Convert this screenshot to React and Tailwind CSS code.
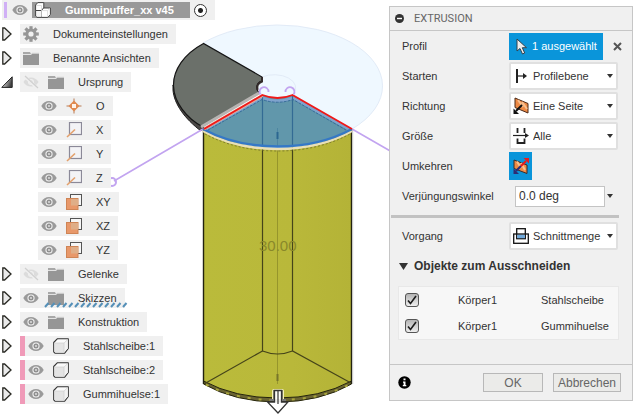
import React from "react";

/* ---------- browser tree icons ---------- */

function EyeIcon() {
  return (
    <svg width="16" height="12" viewBox="0 0 16 12" aria-hidden="true">
      <path d="M0.3 6C3.6-0.6 12.4-0.6 15.7 6C12.4 12.6 3.6 12.6 0.3 6Z" fill="#9a9a9a" />
      <circle cx="8" cy="6" r="3.6" fill="#f0f0f0" />
      <circle cx="8" cy="6" r="2.5" fill="#8f8f8f" />
      <circle cx="8" cy="6" r="0.9" fill="#e6e6e6" />
    </svg>
  );
}

function EyeOffIcon() {
  return (
    <svg width="16" height="14" viewBox="0 0 16 14" aria-hidden="true">
      <path d="M0.5 7C3.6 1 12.4 1 15.5 7C12.4 13 3.6 13 0.5 7Z" fill="#dcdcdc" />
      <circle cx="8" cy="7" r="3" fill="#f0f0f0" />
      <circle cx="8" cy="7" r="1.8" fill="#d4d4d4" />
      <path d="M1.5 1.2L14 13" stroke="#f0f0f0" strokeWidth="3" />
      <path d="M2 1L15 13" stroke="#d0d0d0" strokeWidth="1.3" />
    </svg>
  );
}

function FolderIcon() {
  return (
    <svg width="16" height="13" viewBox="0 0 16 13" aria-hidden="true">
      <path d="M0 0H7L8 2H0Z" fill="#a8a8a8" />
      <path d="M0 3H8L9 1.5H16V13H0Z" fill="#969696" />
      <path d="M0 2.5H8L9 1H16" fill="none" stroke="#dddddd" strokeWidth="0.7" />
    </svg>
  );
}

function GearIcon() {
  return (
    <svg width="16" height="16" viewBox="-8 -8 16 16" aria-hidden="true">
      <g fill="#969696">
        {[0, 45, 90, 135].map((a) => (
          <rect key={a} x="-1.6" y="-7.8" width="3.2" height="15.6" transform={`rotate(${a})`} />
        ))}
        <circle r="5.6" />
      </g>
      <circle r="2.6" fill="#f0f0f0" />
    </svg>
  );
}

function OriginIcon() {
  return (
    <svg width="16" height="16" viewBox="0 0 16 16" aria-hidden="true">
      <path d="M8 0.500V15.500M0.500 8H15.500" stroke="#b97a52" strokeWidth="1" />
      <path d="M8 2.5L13.5 8L8 13.5L2.5 8Z" fill="#e08a50" />
      <rect x="6" y="6" width="4" height="4" fill="#fff3ea" />
    </svg>
  );
}

function AxisIcon() {
  return (
    <svg width="16" height="16" viewBox="0 0 16 16" aria-hidden="true">
      <rect x="3.5" y="0.5" width="12" height="12" fill="#f3f3f6" stroke="#8b8998" strokeWidth="1.2" />
      <path d="M1 15L9 7.5" stroke="#e3a06c" strokeWidth="1.6" />
    </svg>
  );
}

function PlaneIcon() {
  return (
    <svg width="16" height="16" viewBox="0 0 16 16" aria-hidden="true">
      <rect x="4.5" y="0.5" width="11" height="11" fill="#f6f6f6" stroke="#555" />
      <rect x="0.5" y="4.5" width="11.5" height="11" fill="#e8986a" stroke="#cf8455" />
      <rect x="5" y="5" width="7" height="6.5" fill="#dfae88" />
    </svg>
  );
}

function BodyIcon() {
  return (
    <svg width="16" height="16" viewBox="0 0 16 16" aria-hidden="true">
      <path d="M0.7 4.5L4.5 0.7H15.3V10.5L11.5 15.3H2.2L0.7 13.8Z" fill="#fafafa" stroke="#333" strokeWidth="1.1" strokeLinejoin="round" />
      <path d="M1.5 5H11V14.6H2.5L1.5 13.5Z" fill="#e4e4e4" />
      <path d="M11 5L14.8 1.5V10.2L11 14.6Z" fill="#f2f2f2" />
      <path d="M11 5V14.5M11 5L14.8 1.5M1.5 5H11" stroke="#cfcfcf" strokeWidth="0.7" />
    </svg>
  );
}

function AssemblyIcon() {
  return (
    <svg width="16" height="16" viewBox="0 0 16 16" aria-hidden="true">
      <path d="M0.600 3L2.800 0.600H8.800V6.500L7 8.500H0.600Z" fill="#fff" stroke="#444" />
      <path d="M0.600 8.500H6.500V15.400H2L0.600 14Z" fill="#f4f4f4" stroke="#444" />
      <path d="M6.500 8.500L8.500 6H15.400V12.500L12.800 15.400H6.500Z" fill="#fff" stroke="#444" />
      <path d="M1.200 3.500H6.500V14.800M7 8.600H12.600V15M12.600 8.600L15 6.4" fill="none" stroke="#d4d4d4" strokeWidth="0.8" />
    </svg>
  );
}

function Expander({ open, name }) {
  return (
    <button type="button" aria-label={name} aria-expanded={open} className="flex w-5 shrink-0 items-center pl-px">
      {open ? (
        <svg width="12" height="12" viewBox="0 0 12 12" aria-hidden="true">
          <defs>
            <linearGradient id="openArrow" x1="0" y1="0" x2="1" y2="0.4">
              <stop offset="0.2" stopColor="#eeeeee" />
              <stop offset="1" stopColor="#444444" />
            </linearGradient>
          </defs>
          <path d="M0.8 11.4L11.2 0.8V11.4Z" fill="url(#openArrow)" stroke="#222" />
        </svg>
      ) : (
        <svg width="12" height="14" viewBox="0 0 12 14" aria-hidden="true">
          <path d="M1.8 1H3.6L10 7L3.6 13H1.8Z" fill="#eaeaea" stroke="#2a2a24" strokeWidth="1.3" />
        </svg>
      )}
    </button>
  );
}

/* ---------- browser tree ---------- */

const ICONS = {
  gear: GearIcon,
  folder: FolderIcon,
  origin: OriginIcon,
  axis: AxisIcon,
  plane: PlaneIcon,
  body: BodyIcon,
};

const ROWS = [
  { label: "Dokumenteinstellungen", icon: "gear", expander: true },
  { label: "Benannte Ansichten", icon: "folder", expander: true },
  { label: "Ursprung", icon: "folder", eye: "off", expander: true, open: true },
  { label: "O", icon: "origin", eye: "on" },
  { label: "X", icon: "axis", eye: "on" },
  { label: "Y", icon: "axis", eye: "on" },
  { label: "Z", icon: "axis", eye: "on" },
  { label: "XY", icon: "plane", eye: "on" },
  { label: "XZ", icon: "plane", eye: "on" },
  { label: "YZ", icon: "plane", eye: "on" },
  { label: "Gelenke", icon: "folder", eye: "off", expander: true },
  { label: "Skizzen", icon: "folder", eye: "on", expander: true, hatched: true },
  { label: "Konstruktion", icon: "folder", eye: "on", expander: true },
  { label: "Stahlscheibe:1", icon: "body", eye: "on", expander: true, bar: true },
  { label: "Stahlscheibe:2", icon: "body", eye: "on", expander: true, bar: true },
  { label: "Gummihuelse:1", icon: "body", eye: "on", expander: true, bar: true },
];

function TreeRow({ label, icon, eye, expander, open = false, bar, hatched }) {
  const Icon = ICONS[icon];
  return (
    <li className="flex h-5">
      {expander ? <Expander open={open} name={label} /> : <span className="w-[38px] shrink-0" />}
      <div className="relative flex items-center bg-[#f0f0f0] pr-2">
        {bar && <span className="h-full w-[5px] bg-[#f09ab8]" />}
        {eye && (
          <button type="button" aria-label={`${label} Sichtbarkeit`} className="flex w-[22px] justify-center">
            {eye === "on" ? <EyeIcon /> : <EyeOffIcon />}
          </button>
        )}
        <span className={eye ? "flex w-7 justify-center" : "flex w-[22px] justify-center"}>
          <Icon />
        </span>
        <span className={eye ? "pl-2" : "pl-[11px]"}>{label}</span>
        {hatched && (
          <svg className="absolute bottom-0 left-6" width="84" height="6" aria-hidden="true">
            <defs>
              <pattern id="hatch" width="6" height="6" patternUnits="userSpaceOnUse">
                <path d="M1 5L4.500 1" stroke="#5590b8" strokeWidth="2" />
              </pattern>
            </defs>
            <rect width="84" height="6" fill="url(#hatch)" />
          </svg>
        )}
      </div>
    </li>
  );
}

function BrowserTree() {
  return (
    <nav aria-label="Browser" className="relative flex flex-col items-start gap-1">
      <div className="ml-0.5 flex h-5 items-center bg-[#f0f0f0] pr-2">
        <span className="ml-0.5 h-4 w-[3px] bg-[#d0b0f5]" />
        <button type="button" aria-label="Sichtbarkeit" className="flex w-[25px] justify-center">
          <EyeIcon />
        </button>
        <div className="flex h-4 items-center bg-[#999999] pr-4 pl-[3px] font-bold text-white">
          <AssemblyIcon />
          <span className="pl-[14px]">Gummipuffer_xx v45</span>
        </div>
        <input
          type="radio"
          defaultChecked
          aria-label="Komponente aktivieren"
          className="ml-1 size-[13px] appearance-none rounded-full border border-[#333] bg-white bg-[radial-gradient(circle,#222_0_2px,transparent_3px)]"
        />
      </div>
      <ul className="flex flex-col gap-1">
        {ROWS.map((row) => (
          <TreeRow key={row.label} {...row} />
        ))}
      </ul>
    </nav>
  );
}

/* ---------- model view ---------- */

function ModelView() {
  return (
    <svg className="absolute inset-0 h-full w-full" role="img" aria-label="3D-Ansicht">
      <defs>
        <linearGradient id="rubber" x1="0" y1="0" x2="1" y2="0">
          <stop offset="0" stopColor="#babb3b" />
          <stop offset="0.6" stopColor="#b9b83a" />
          <stop offset="1" stopColor="#b4b337" />
        </linearGradient>
      </defs>

      {/* sketch disc */}
      <path d="M203 43A105 61 0 0 1 352 129L292 95Q277 101 262 95L257 86L262 77Z" fill="#eff8ff" stroke="#e2ebf7" />
      <path d="M262 77A21.500 13 0 0 1 293 94" fill="none" stroke="#e2ebf7" />

      {/* steel washer */}
      <path d="M173 85V90C174 104 185 119 201 131L204 128L180 100Z" fill="#4b4846" stroke="#1a1a1a" />
      <path d="M203.500 43.500L262 77V81C257 82 255 88 259 93L203 127C186 118 174 102 173.500 86C173 70 184 54 203.500 43.500Z" fill="#6b706a" />
      <path d="M203 127C186 118 174 102 173.500 86C173 70 184 54 203.500 43.500L262 77V81C257 82 255 88 259 93" fill="none" stroke="#151515" strokeWidth="1.2" />
      <path d="M262 77V81.500C258 83 256.500 86 257.500 90" fill="none" stroke="#332a2a" strokeWidth="2" />

      {/* rubber body */}
      <path d="M203.500 129V383Q235 402 277.500 402Q320 402 351.500 383V129Q320 148 277.500 148Q235 148 203.500 129Z" fill="url(#rubber)" />
      <path d="M203.500 381Q235 398 277.500 398Q320 398 351.500 381V384Q320 402 277.500 402Q235 402 203.500 384Z" fill="#6a6433" stroke="#24230c" strokeWidth="1" />
      <path d="M206 384.500Q235 400 277.500 400Q320 400 349 384.500" fill="none" stroke="#a8a53c" strokeWidth="2" strokeDasharray="3 8" />
      <path d="M203.500 129V384M351.500 129V384" stroke="#222211" strokeWidth="1.4" />
      <path d="M352.700 130V384" stroke="#c9c9c9" />
      <path d="M262.500 145V351M292.500 145V351" stroke="#45441a" strokeWidth="1.2" />
      <path d="M277.500 148V384" stroke="#96952c" />
      <path d="M262.500 351Q277.500 357 292.500 351L351 383M262.500 351L204 384" fill="none" stroke="#45441a" strokeWidth="1.2" />
      <path d="M277.500 374V381" stroke="#77752a" strokeWidth="2" />
      <text x="259" y="251" fontSize="15" fill="#89882a" fontFamily="Liberation Sans, Arial, sans-serif">30.00</text>

      {/* construction lines */}
      <path d="M203 129L114 181M352 129L392 152" stroke="#c2a4f0" strokeWidth="1.6" />
      <circle cx="112" cy="182" r="4" fill="none" stroke="#c2a4f0" strokeWidth="2" />

      {/* selected profile */}
      <path d="M203 129L262.500 95Q277.500 101 292.500 95L352 129Q320 147 277.500 147Q235 147 203 129Z" fill="#6197ab" />
      <path d="M206 129L262 98Q277.500 104 293 98L349 129" fill="none" stroke="#7fa3cd" strokeWidth="3" />
      <path d="M208 130L262 99.500Q277.500 105 293 99.500L346 130" fill="none" stroke="#356c97" strokeDasharray="3 1" />
      <path d="M262.500 96V145M292.500 96V145" stroke="#336b94" strokeWidth="1.2" />
      <path d="M277.500 128V146" stroke="#4d86a1" />
      <path d="M277.500 132V139" stroke="#2c6791" strokeWidth="2" />
      <path d="M203 131Q235 149 277.500 149Q320 149 352 131" fill="none" stroke="#e9dfb8" strokeWidth="2.500" />
      <path d="M205 134Q237 151 277.500 151Q318 151 350 134" fill="none" stroke="#6b6928" strokeWidth="0.8" strokeDasharray="2 2" />
      <path d="M203 129Q235 146.500 277.500 146.500Q320 146.500 352 129" fill="none" stroke="#3578c6" strokeWidth="2.500" />
      <path d="M259 93L201 127" stroke="#b7b4b2" strokeWidth="3" />
      <path d="M204 129L262.500 95.500" stroke="#e6ad9b" strokeWidth="3" />
      <path d="M204 129L262.500 95Q277.500 101 292.500 95L352 129" fill="none" stroke="#f01818" strokeWidth="1.800" />
      <path d="M260.500 94.500A4.500 4.500 0 1 1 268.500 92M293.500 94.500A4.500 4.500 0 1 0 285.500 92" fill="none" stroke="#c2a4f0" strokeWidth="1.800" />

      {/* extrusion handle */}
      <path d="M272 399V391Q272 389 274 389H282Q284 389 284 391V399Z" fill="#f5f2b8" />
      <path d="M274.500 390.500H281.500V402H288L278 413L267.500 402H274.500Z" fill="#ffffff" fillOpacity="0.9" stroke="#333" strokeWidth="1.3" />
      <path d="M274 402V390M278 391V404M282 390V402" stroke="#333" strokeWidth="1.2" />
      <path d="M270 400H274M282 400H286" stroke="#777" strokeWidth="2" />
    </svg>
  );
}

/* ---------- dialog icons ---------- */

function CursorIcon() {
  return (
    <svg width="12" height="17" viewBox="0 0 12 17" aria-hidden="true">
      <path d="M1 1V13L4 10.500L6.500 16L8.700 15L6.300 9.700H10.500Z" fill="#eeeeee" stroke="#35404a" />
    </svg>
  );
}

function StartIcon() {
  return (
    <svg width="16" height="16" viewBox="0 0 16 16" aria-hidden="true">
      <path d="M4 1V15" stroke="#222" strokeWidth="2" />
      <path d="M4 8H12" stroke="#222" strokeWidth="1.2" />
      <path d="M10 5L14 8L10 11Z" fill="#222" />
    </svg>
  );
}

function SideIcon() {
  return (
    <svg width="16" height="18" viewBox="0 0 16 18" aria-hidden="true">
      <path d="M2 1L15 6.500V16L2 10.500Z" fill="#ee8a45" stroke="#4b2a18" />
      <path d="M5 3L10 10M9 5L14 12" stroke="#f9c08f" strokeWidth="2" />
      <path d="M9 8L3 14" stroke="#111" strokeWidth="2" />
      <path d="M0.500 11.500V17H6Z" fill="#111" />
    </svg>
  );
}

function ExtentIcon() {
  return (
    <svg width="16" height="18" viewBox="0 0 16 18" aria-hidden="true">
      <path d="M4.500 1V6M11.500 1V6" stroke="#222" strokeWidth="1.800" />
      <path d="M0 8.500H13" stroke="#222" strokeWidth="1.2" />
      <path d="M12 6L16 8.500L12 11Z" fill="#222" />
      <path d="M4.500 11.500V16H11.500V11.500" fill="none" stroke="#222" strokeWidth="1.800" />
    </svg>
  );
}

function FlipIcon() {
  return (
    <svg width="18" height="18" viewBox="0 0 18 18" aria-hidden="true">
      <path d="M2 3L15 8V16.500L2 11.500Z" fill="#ee8a45" stroke="#3a2a28" />
      <path d="M5 4.500L9 11M9 6L13 13" stroke="#f9c08f" strokeWidth="2" />
      <path d="M9 9L4 14" stroke="#2d2d75" strokeWidth="2.200" />
      <path d="M1.500 11.500V17H7Z" fill="#2d2d75" />
      <path d="M9 9L14 4" stroke="#e81c1c" strokeWidth="2.200" />
      <path d="M11.500 1H17V6.500Z" fill="#e81c1c" />
    </svg>
  );
}

function IntersectIcon() {
  return (
    <svg width="16" height="16" viewBox="0 0 16 16" aria-hidden="true">
      <rect x="0.700" y="6" width="14.600" height="9.300" fill="#fff" stroke="#111" strokeWidth="1.300" />
      <rect x="3.700" y="0.700" width="8.600" height="10" fill="#fff" stroke="#111" strokeWidth="1.300" />
      <rect x="4.200" y="6.500" width="7.600" height="3.700" fill="#6fa9dc" />
      <path d="M4 6H12" stroke="#111" strokeWidth="1.300" />
    </svg>
  );
}

function Caret() {
  return (
    <svg className="pointer-events-none shrink-0" width="6" height="4" viewBox="0 0 6 4" aria-hidden="true">
      <path d="M0 0H6L3 4Z" fill="#333" />
    </svg>
  );
}

/* ---------- dialog ---------- */

function Field({ label, htmlFor, children }) {
  return (
    <div className="flex h-[30px] items-center pr-[14px] pl-3">
      <label htmlFor={htmlFor} className="w-[107px] shrink-0">
        {label}
      </label>
      {children}
    </div>
  );
}

function IconSelect({ id, icon, value }) {
  return (
    <div className="flex h-7 flex-1 items-center gap-1 rounded-xs border-2 border-[#e0e0e0] bg-white pr-[3px] pl-[2px]">
      <span className="flex w-4 shrink-0 justify-center">{icon}</span>
      <select id={id} defaultValue={value} className="min-w-0 flex-1 appearance-none bg-transparent">
        <option>{value}</option>
      </select>
      <Caret />
    </div>
  );
}

function CutRow({ body, component }) {
  return (
    <tr className="h-[26px]">
      <td className="w-[59px] pl-[6px]">
        <label className="grid size-[14px]">
          <input
            type="checkbox"
            defaultChecked
            aria-label={`${body} ${component}`}
            className="col-start-1 row-start-1 size-[14px] appearance-none rounded-[3px] border border-[#555] bg-linear-to-b from-[#b5b5b5] to-[#eeeeee]"
          />
          <svg className="pointer-events-none col-start-1 row-start-1" width="14" height="14" viewBox="0 0 14 14" aria-hidden="true">
            <path d="M3 7.500L5.500 10.500L11 3" fill="none" stroke="#1c1c1c" strokeWidth="1.600" />
          </svg>
        </label>
      </td>
      <td className="w-[83px]">{body}</td>
      <td>{component}</td>
    </tr>
  );
}

function ExtrusionDialog() {
  return (
    <section aria-label="Extrusion" className="relative mt-[6px] w-[244px] shrink-0 self-start border border-[#c6c6c6] bg-[#f0f0f0]">
      <header className="flex h-6 items-center gap-[10px] border-b border-[#c6c6c6] pl-[5px]">
        <button type="button" aria-label="Einklappen">
          <svg width="9" height="9" viewBox="0 0 9 9" aria-hidden="true">
            <circle cx="4.500" cy="4.500" r="4.500" fill="#333" />
            <path d="M2 4.500H7" stroke="#fff" strokeWidth="1.400" />
          </svg>
        </button>
        <h2 className="font-[Roboto,sans-serif] text-[#666]">EXTRUSION</h2>
      </header>

      <Field label="Profil" htmlFor="profil">
        <button id="profil" type="button" className="flex h-[27px] w-[94px] items-center gap-1 bg-[#0a95da] pl-[7px] text-white">
          <CursorIcon />
          <span className="whitespace-nowrap">1 ausgewählt</span>
        </button>
        <button type="button" aria-label="Auswahl aufheben" className="-mr-1 ml-auto">
          <svg width="9" height="9" viewBox="0 0 9 9" aria-hidden="true">
            <path d="M1 1L8 8M8 1L1 8" stroke="#555" strokeWidth="2" />
          </svg>
        </button>
      </Field>
      <Field label="Starten" htmlFor="starten">
        <IconSelect id="starten" icon={<StartIcon />} value="Profilebene" />
      </Field>
      <Field label="Richtung" htmlFor="richtung">
        <IconSelect id="richtung" icon={<SideIcon />} value="Eine Seite" />
      </Field>
      <Field label="Größe" htmlFor="groesse">
        <IconSelect id="groesse" icon={<ExtentIcon />} value="Alle" />
      </Field>
      <Field label="Umkehren" htmlFor="umkehren">
        <button id="umkehren" type="button" aria-pressed="true" className="flex h-7 w-[23px] items-center justify-center bg-[#0a95da]">
          <FlipIcon />
        </button>
      </Field>
      <Field label="Verjüngungswinkel" htmlFor="winkel">
        <input
          id="winkel"
          type="text"
          defaultValue="0.0 deg"
          className="ml-[6px] h-[21px] w-[90px] border border-[#c4c4c4] bg-white px-[3px] text-xs"
        />
        <span className="pl-[2px]">
          <Caret />
        </span>
      </Field>

      <hr className="mt-1 mr-[13px] mb-[3px] ml-px h-[3px] border-0 bg-[#c2c2c2]" />

      <Field label="Vorgang" htmlFor="vorgang">
        <IconSelect id="vorgang" icon={<IntersectIcon />} value="Schnittmenge" />
      </Field>

      <button type="button" aria-expanded="true" className="flex h-[30px] items-center gap-[6px] pl-[9px] text-xs font-bold">
        <svg width="9" height="7" viewBox="0 0 9 7" aria-hidden="true">
          <path d="M0 0H9L4.500 7Z" fill="#333" />
        </svg>
        Objekte zum Ausschneiden
      </button>
      <div className="mt-[5px] mr-[13px] mb-6 ml-2 border border-[#e8e8e8] bg-[#f7f7f7]">
        <table className="w-full table-fixed text-left">
          <tbody>
            <CutRow body="Körper1" component="Stahlscheibe" />
            <CutRow body="Körper1" component="Gummihuelse" />
          </tbody>
        </table>
      </div>

      <footer className="flex h-9 items-center gap-[10px] border-t border-[#c6c6c6] pr-[11px] pl-2 text-xs text-[#666]">
        <button type="button" aria-label="Info" className="mr-auto">
          <svg width="13" height="13" viewBox="0 0 13 13" aria-hidden="true">
            <circle cx="6.500" cy="6.500" r="6.200" fill="#000" />
            <path d="M5.500 2.500H7.500V4.300H5.500ZM5 5.500H7.500V9H8.300V10.300H4.800V9H5.600V6.700H5Z" fill="#fff" />
          </svg>
        </button>
        <button type="button" className="flex h-[19px] w-[60px] items-center justify-center border border-[#b8b8b8] bg-[#ebebe9]">
          OK
        </button>
        <button type="button" className="flex h-[19px] w-[68px] items-center justify-center border border-[#b8b8b8] bg-[#ebebe9]">
          Abbrechen
        </button>
      </footer>
    </section>
  );
}

export default function App() {
  return (
    <main className="relative flex min-h-screen items-start justify-between overflow-hidden bg-white font-['Liberation_Sans',Arial,sans-serif] text-[11px] leading-4 text-[#333]">
      <ModelView />
      <BrowserTree />
      <ExtrusionDialog />
    </main>
  );
}
